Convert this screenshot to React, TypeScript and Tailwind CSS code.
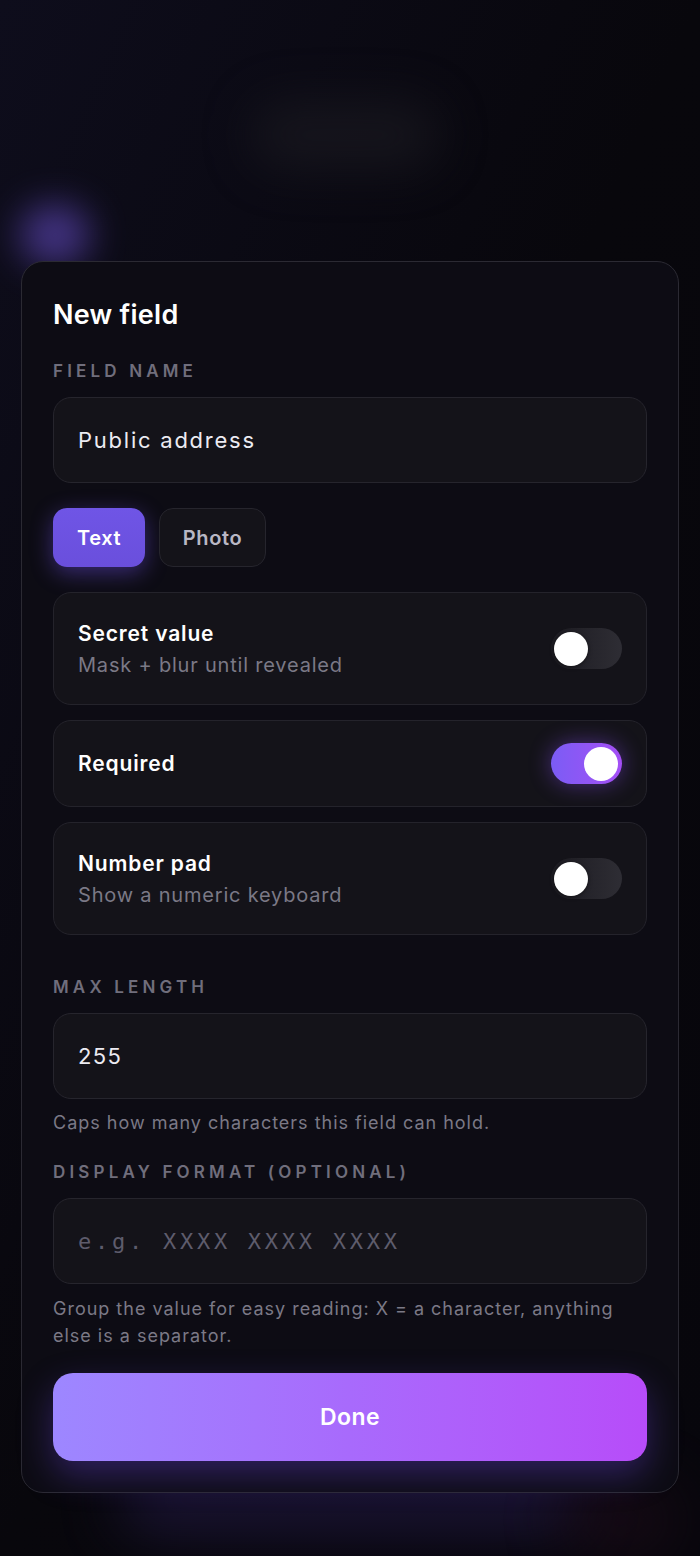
import React from "react";

function Toggle({ on }: { on: boolean }) {
  return on ? (
    <div className="flex h-[41px] w-[71px] shrink-0 items-center justify-end rounded-full bg-gradient-to-r from-[#7b5cf5] to-[#a44ef5] px-[4px] shadow-[0_0_22px_rgba(140,80,250,0.45)]">
      <div className="h-[34px] w-[34px] rounded-full bg-white" />
    </div>
  ) : (
    <div className="flex h-[41px] w-[71px] shrink-0 items-center rounded-full bg-gradient-to-r from-[#1c1b21] to-[#2e2d34] px-[3px]">
      <div className="h-[34px] w-[34px] rounded-full bg-white shadow-[0_1px_4px_rgba(0,0,0,0.5)]" />
    </div>
  );
}

function ToggleRow({ title, sub, on }: { title: string; sub?: string; on: boolean }) {
  return (
    <div
      className={`flex items-center justify-between rounded-[18px] border border-[#24232b] bg-[#141319] px-6 ${
        sub ? "h-[113px]" : "h-[87px]"
      }`}
    >
      <div className="flex flex-col gap-[6px]">
        <div className="text-[21px] font-semibold leading-[26px] tracking-[0.04em] text-white">{title}</div>
        {sub ? <div className="text-[20px] leading-[24px] tracking-[0.04em] text-[#7b7986]">{sub}</div> : null}
      </div>
      <Toggle on={on} />
    </div>
  );
}

function Label({ children }: { children: React.ReactNode }) {
  return (
    <div className="text-[17px] font-semibold uppercase leading-[20px] tracking-[0.245em] text-[#706e7c]">
      {children}
    </div>
  );
}

export default function App() {
  return (
    <div className="relative h-[1556px] w-[700px] overflow-hidden bg-[#09080f] font-['Inter']">
      {/* blurred background */}
      <div className="absolute inset-0 bg-gradient-to-br from-[#0e0d1c] via-[#08070c] to-[#07060c]" />
      <div className="absolute left-[250px] top-[100px] h-[70px] w-[190px] rounded-full bg-[#1a1920] opacity-70 blur-[24px]" />
      <div className="absolute left-[20px] top-[205px] h-[60px] w-[70px] rounded-full bg-[#5a44b0] opacity-70 blur-[18px]" />
      <div className="absolute left-[120px] top-[1470px] h-[60px] w-[460px] rounded-full bg-[#2a1f55] opacity-60 blur-[30px]" />
      <div className="absolute right-[20px] top-[1480px] h-[80px] w-[120px] rounded-full bg-[#2a1020] opacity-40 blur-[30px]" />

      <div className="relative px-[21px] pt-[261px]">
        <div className="flex flex-col rounded-[22px] border border-[#2b2a33] bg-[#0d0c14] px-[31px] pb-[31px] pt-[36px]">
          <h1 className="text-[27px] font-semibold leading-[34px] tracking-[0.01em] text-white">New field</h1>

          <div className="mt-[29px]">
            <Label>Field name</Label>
          </div>
          <div className="mt-[16px] flex h-[86px] items-center rounded-[18px] border border-[#26252d] bg-[#141319] px-6 text-[22px] tracking-[0.08em] text-[#ecebf2]">
            Public address
          </div>

          <div className="mt-[25px] flex gap-[14px]">
            <div className="flex h-[59px] w-[92px] items-center justify-center rounded-[14px] bg-gradient-to-b from-[#6f55e6] to-[#6a4fdc] text-[20px] font-semibold tracking-[0.03em] text-white shadow-[0_6px_22px_rgba(110,80,230,0.45)]">
              Text
            </div>
            <div className="flex h-[59px] w-[107px] items-center justify-center rounded-[14px] border border-[#26252d] bg-[#141319] text-[20px] font-semibold tracking-[0.03em] text-[#b9b7c4]">
              Photo
            </div>
          </div>

          <div className="mt-[25px] flex flex-col gap-[15px]">
            <ToggleRow title="Secret value" sub="Mask + blur until revealed" on={false} />
            <ToggleRow title="Required" on={true} />
            <ToggleRow title="Number pad" sub="Show a numeric keyboard" on={false} />
          </div>

          <div className="mt-[42px]">
            <Label>Max length</Label>
          </div>
          <div className="mt-[16px] flex h-[86px] items-center rounded-[18px] border border-[#26252d] bg-[#141319] px-6 text-[22px] tracking-[0.06em] text-[#ecebf2]">
            255
          </div>
          <div className="mt-[12px] text-[18px] leading-[24px] tracking-[0.055em] text-[#7b7986]">
            Caps how many characters this field can hold.
          </div>

          <div className="mt-[27px]">
            <Label>Display format (optional)</Label>
          </div>
          <div className="mt-[16px] flex h-[86px] items-center rounded-[18px] border border-[#26252d] bg-[#141319] px-6 font-['DejaVu_Sans_Mono',monospace] text-[22px] tracking-[0.17em] text-[#5e5c6c]">
            e.g. XXXX XXXX XXXX
          </div>
          <div className="mt-[11px] text-[18px] leading-[27px] tracking-[0.055em] text-[#7b7986]">
            Group the value for easy reading: X = a character, anything else is a separator.
          </div>

          <div className="mt-[24px] flex h-[88px] items-center justify-center rounded-[20px] bg-gradient-to-r from-[#9d87ff] via-[#a86afc] to-[#b74cf9] text-[23px] font-semibold tracking-[0.02em] text-white shadow-[0_14px_34px_rgba(110,70,230,0.35)]">
            Done
          </div>
        </div>
      </div>
    </div>
  );
}
